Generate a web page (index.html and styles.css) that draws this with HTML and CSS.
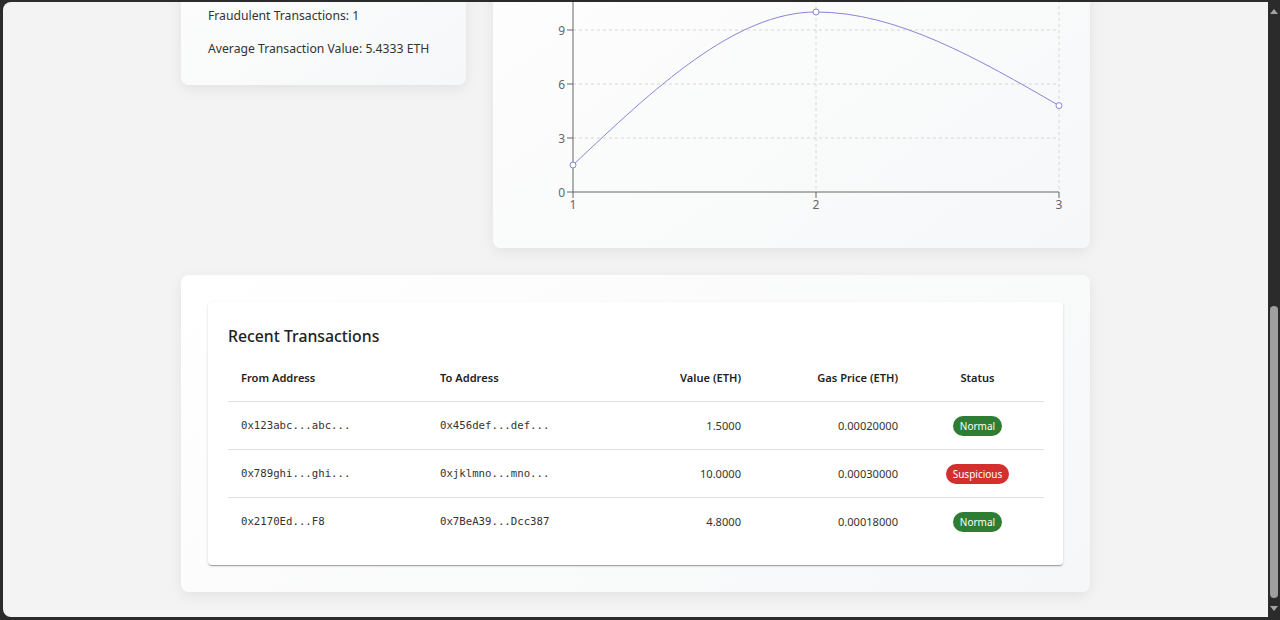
FILE: index.html
```html
<!DOCTYPE html>
<html lang="en">
<head>
<meta charset="utf-8">
<title>Transactions Dashboard</title>
<link rel="stylesheet" href="styles.css">
</head>
<body>
<div class="frame">
  <div class="viewport">
    <main class="page">
      <section class="top-grid">
        <div class="card stats">
          <h2 class="card-title">Statistics</h2>
          <p class="stat">Total Transactions: 3</p>
          <p class="stat">Normal Transactions: 2</p>
          <p class="stat">Fraudulent Transactions: 1</p>
          <p class="stat">Average Transaction Value: 5.4333 ETH</p>
        </div>
        <div class="card chart-card">
          <h2 class="card-title">Transaction Values</h2>
          <svg class="chart" width="543" height="300" viewBox="0 0 543 300">
            <g class="grid">
              <line x1="53" y1="217" x2="539" y2="217"/>
              <line x1="53" y1="163" x2="539" y2="163"/>
              <line x1="53" y1="109" x2="539" y2="109"/>
              <line x1="53" y1="55" x2="539" y2="55"/>
              <line x1="296" y1="55" x2="296" y2="271"/>
              <line x1="539" y1="55" x2="539" y2="271"/>
            </g>
            <g class="axis">
              <line x1="53" y1="55" x2="53" y2="271"/>
              <line x1="53" y1="271" x2="539" y2="271"/>
              <line x1="47" y1="271" x2="53" y2="271"/>
              <line x1="47" y1="217" x2="53" y2="217"/>
              <line x1="47" y1="163" x2="53" y2="163"/>
              <line x1="47" y1="109" x2="53" y2="109"/>
              <line x1="47" y1="55" x2="53" y2="55"/>
              <line x1="53" y1="271" x2="53" y2="277"/>
              <line x1="296" y1="271" x2="296" y2="277"/>
              <line x1="539" y1="271" x2="539" y2="277"/>
            </g>
            <g class="ticks ticks-y">
              <text x="45" y="275.5">0</text>
              <text x="45" y="221.5">3</text>
              <text x="45" y="167.5">6</text>
              <text x="45" y="113.5">9</text>
              <text x="45" y="59.5">12</text>
            </g>
            <g class="ticks ticks-x">
              <text x="53" y="288">1</text>
              <text x="296" y="288">2</text>
              <text x="539" y="288">3</text>
            </g>
            <path class="series" d="M53,244 C134,167.5 215,91 296,91 C377,91 458,137.8 539,184.6"/>
            <g class="dots">
              <circle cx="53" cy="244" r="3"/>
              <circle cx="296" cy="91" r="3"/>
              <circle cx="539" cy="184.6" r="3"/>
            </g>
          </svg>
        </div>
      </section>

      <section class="card table-card">
        <div class="paper">
          <h2 class="paper-title">Recent Transactions</h2>
          <table class="tx-table">
            <colgroup>
              <col class="c-from"><col class="c-to"><col class="c-val"><col class="c-gas"><col class="c-status">
            </colgroup>
            <thead>
              <tr>
                <th>From Address</th>
                <th>To Address</th>
                <th class="num">Value (ETH)</th>
                <th class="num">Gas Price (ETH)</th>
                <th class="center">Status</th>
              </tr>
            </thead>
            <tbody>
              <tr>
                <td class="mono">0x123abc...abc...</td>
                <td class="mono">0x456def...def...</td>
                <td class="num">1.5000</td>
                <td class="num">0.00020000</td>
                <td class="center"><span class="chip ok">Normal</span></td>
              </tr>
              <tr>
                <td class="mono">0x789ghi...ghi...</td>
                <td class="mono">0xjklmno...mno...</td>
                <td class="num">10.0000</td>
                <td class="num">0.00030000</td>
                <td class="center"><span class="chip bad">Suspicious</span></td>
              </tr>
              <tr>
                <td class="mono">0x2170Ed...F8</td>
                <td class="mono">0x7BeA39...Dcc387</td>
                <td class="num">4.8000</td>
                <td class="num">0.00018000</td>
                <td class="center"><span class="chip ok">Normal</span></td>
              </tr>
            </tbody>
          </table>
        </div>
      </section>
    </main>
  </div>
  <div class="scrollbar">
    <span class="arrow up"></span>
    <div class="track"><div class="thumb"></div></div>
    <span class="arrow down"></span>
  </div>
</div>
</body>
</html>
```

FILE: styles.css
```css
html, body {
  margin: 0;
  padding: 0;
  height: 620px;
  overflow: hidden;
  background: #2b2b2b;
  font-family: "Noto Sans", "Open Sans", Arial, sans-serif;
  color: #333;
}

.frame {
  display: flex;
  height: 620px;
}

.viewport {
  flex: 1;
  margin: 2px 0 3px 3px;
  background: #f3f3f3;
  border-radius: 8px 0 0 8px;
  overflow: hidden;
}

.page {
  width: 909px;
  margin: -152px auto 0;
  display: flex;
  flex-direction: column;
  gap: 27px;
}

.top-grid {
  display: grid;
  grid-template-columns: 285px 597px;
  gap: 27px;
  align-items: start;
}

.card {
  background: linear-gradient(145deg, #ffffff 0%, #f6f7f8 100%);
  border-radius: 8px;
  box-shadow: 0 4px 14px rgba(0, 0, 0, 0.07);
  padding: 27px;
  box-sizing: border-box;
}

.card-title {
  margin: 0 0 16px;
  font-size: 18px;
  line-height: 28px;
  font-weight: 500;
}

.stats {
  display: flex;
  flex-direction: column;
  gap: 13px;
  padding-bottom: 26px;
}
.stats .card-title { margin-bottom: 22px; }

.stat {
  margin: 0;
  font-size: 12.2px;
  line-height: 20px;
  color: #333;
  white-space: nowrap;
}

.chart-card .card-title { margin-bottom: 16px; }

.chart {
  display: block;
}
.grid line {
  stroke: #d6d6d6;
  stroke-width: 1;
  stroke-dasharray: 3 3;
}
.axis line {
  stroke: #666;
  stroke-width: 1;
}
.ticks text {
  fill: #666;
  font-size: 12px;
  font-family: "Noto Sans", "Open Sans", Arial, sans-serif;
}
.ticks-y text { text-anchor: end; }
.ticks-x text { text-anchor: middle; }
.series {
  fill: none;
  stroke: #8884d8;
  stroke-width: 1;
}
.dots circle {
  fill: #fff;
  stroke: #8884d8;
  stroke-width: 1;
}

.paper {
  background: #fff;
  border-radius: 4px;
  box-shadow: 0 2px 1px -1px rgba(0,0,0,0.2), 0 1px 1px 0 rgba(0,0,0,0.14), 0 1px 3px 0 rgba(0,0,0,0.12);
  padding: 20px;
}

.paper-title {
  margin: 0 0 4px;
  font-size: 15.8px;
  line-height: 28px;
  font-weight: 500;
  color: #222;
}

.tx-table {
  width: 816px;
  border-collapse: collapse;
  table-layout: fixed;
}
.c-from { width: 199px; }
.c-to { width: 199px; }
.c-val { width: 128px; }
.c-gas { width: 157px; }
.c-status { width: 133px; }

.tx-table th,
.tx-table td {
  height: 47px;
  padding: 0 13px;
  text-align: left;
  border-bottom: 1px solid #e0e0e0;
  font-size: 11.1px;
  color: #333;
  white-space: nowrap;
}
.tx-table th {
  font-weight: 600;
  color: #222;
}
.tx-table tbody tr:last-child td { border-bottom: 0; }
.tx-table .num { text-align: right; }
.tx-table .center { text-align: center; }
.tx-table .mono {
  font-family: "DejaVu Sans Mono", "Liberation Mono", monospace;
  font-size: 10.7px;
}

.chip {
  display: inline-block;
  height: 20px;
  line-height: 20px;
  padding: 0 7px;
  border-radius: 10px;
  color: #fff;
  font-size: 10px;
  vertical-align: middle;
}
.chip.ok { background: #2e7d32; }
.chip.bad { background: #d32f2f; }

.scrollbar {
  width: 12px;
  display: flex;
  flex-direction: column;
  align-items: center;
  background: #2b2b2b;
}
.arrow {
  width: 0;
  height: 0;
  border-left: 4px solid transparent;
  border-right: 4px solid transparent;
  margin: 9px 0 4px;
}
.arrow.up { border-bottom: 5px solid #a3a3a3; }
.arrow.down { border-top: 5px solid #a3a3a3; margin: 4px 0 9px; }
.track {
  flex: 1;
  width: 8px;
  display: flex;
  flex-direction: column;
  justify-content: flex-end;
}
.thumb {
  height: 292px;
  margin-bottom: 4px;
  border-radius: 4px;
  background: #9f9f9f;
}
```
